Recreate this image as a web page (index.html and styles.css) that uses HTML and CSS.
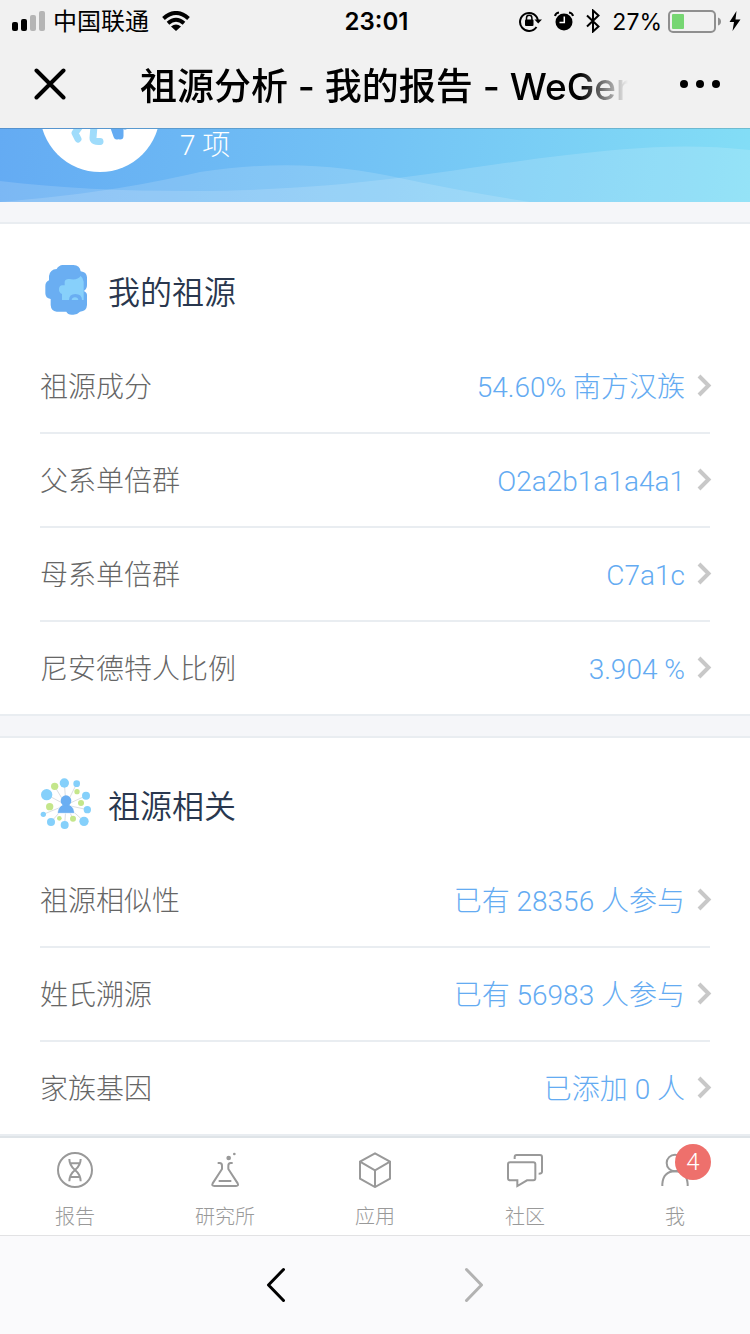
FILE: index.html
```
<!DOCTYPE html>
<html lang="zh-CN">
<head>
<meta charset="utf-8" />
<meta name="viewport" content="width=device-width, initial-scale=1" />
<title>祖源分析 - 我的报告 - WeGene</title>
<link rel="stylesheet" href="styles.css">
</head>
<body>
<header class="top">
    <div class="status">
        <div class="status_left">
            <svg width="34" height="20" viewBox="0 0 34 20"><rect y="11" width="6" height="9" rx="2"/><rect x="9" y="8" width="6" height="12" rx="2"/><g fill="#b5b5b5"><rect x="18" y="4" width="6" height="16" rx="2"/><rect x="27" width="6" height="20" rx="2"/></g></svg>
            <span class="carrier">中国联通</span>
            <svg width="28" height="20" viewBox="0 0 28 20"><g fill="none" stroke="#000" stroke-width="4"><path d="M1.500 7.500Q14-3.500 26.500 7.500"/><path d="M6 12.200Q14 5.400 22 12.200"/></g><path d="M9 15.400Q14 11.500 19 15.400L14 20Z"/></svg>
        </div>
        <span class="time">23:01</span>
        <div class="status_right">
            <svg width="23" height="22" viewBox="0 0 23 22"><path d="M17.500 17A9 9 0 1 1 19 11" fill="none" stroke="#000" stroke-width="2"/><path d="M15.500 9.500H23L19.200 13.500Z"/><rect x="6" y="9.500" width="8.500" height="6.500" rx="1"/><path d="M7.500 10V8a2.700 2.700 0 0 1 5.400 0v2" fill="none" stroke="#000" stroke-width="1.500"/></svg>
            <svg width="20" height="20" viewBox="0 0 20 20"><circle cx="10" cy="11" r="8.500"/><path d="M1 5Q1.500 2 5 1.500M19 5Q18.500 2 15 1.500" fill="none" stroke="#000" stroke-width="2"/><path d="M10.300 5.500V11.500H5.500" fill="none" stroke="#fff" stroke-width="1.500"/></svg>
            <svg width="14" height="24" viewBox="0 0 14 24"><path d="M1 6.500L12.500 17.500L7 22.500V1.500L12.500 6.500L1 17.500" fill="none" stroke="#000" stroke-width="2"/></svg>
            <span class="percent">27%</span>
            <svg width="54" height="24" viewBox="0 0 54 24"><rect x="1" y="2" width="46" height="21" rx="4" fill="none" stroke="#8f8f8f" stroke-width="2"/><rect x="4" y="5" width="12" height="15" rx="1" fill="#76d672"/><path d="M50 8.500Q53 9.500 53 12.500Q53 15.500 50 16.500Z" fill="#8f8f8f"/></svg>
            <svg width="12" height="20" viewBox="0 0 12 20"><path d="M7.500 0L0.500 11H5L3.500 20L11.500 8.500H6.500Z"/></svg>
        </div>
    </div>
    <div class="titlebar">
        <button class="close" aria-label="关闭"><svg width="32" height="32" viewBox="0 0 32 32"><path d="M2.500 2.500L29.500 29.500M29.500 2.500L2.500 29.500" stroke="#000" stroke-width="4" stroke-linecap="round"/></svg></button>
        <h1>祖源分析 - 我的报告 - WeGene</h1>
        <button class="more" aria-label="更多"><svg width="40" height="8" viewBox="0 0 40 8"><circle cx="4" cy="4" r="4"/><circle cx="20" cy="4" r="4"/><circle cx="36" cy="4" r="4"/></svg></button>
    </div>
</header>

<main>
    <div class="banner">
        <svg class="wave" viewBox="0 0 750 74" preserveAspectRatio="none">
            <g fill="#fff" fill-opacity="0.150">
                <path d="M0 53C60 60 120 63 190 63C360 63 460 39 567 27C620 21 680 14 750 22V74H0Z"/>
                <path d="M0 74C80 67 135 59 200 44C280 32 340 37 400 50Q460 63 530 74Z"/>
            </g>
        </svg>
        <svg class="avatar" width="120" height="120" viewBox="0 0 120 120">
            <circle cx="60" cy="60" r="60" fill="#fff"/>
            <g fill="none" stroke-linecap="round" stroke-linejoin="round" stroke-width="7">
                <path d="M40 74L35 81L38 87M54 74L53 86Q53 90 60 89.500" stroke="#9fdcfb"/>
                <path d="M72 70L77 84M74 74L80 78V84" stroke="#64abf2"/>
                <path d="M85 70V75" stroke="#64abf2" stroke-width="5"/>
            </g>
        </svg>
        <span class="count">7 项</span>
    </div>

    <section class="card">
        <h2>
            <svg width="52" height="52" viewBox="60 42 156 156">
                <path fill="#6aaef2" d="M128 45H160Q180 46 182 64Q200 66 201 82V105Q201 117 191 123Q201 127 201 135V165Q200 184 180 185Q172 194 160 194H155Q143 194 139 185H110Q93 183 92 165V147Q76 145 76 130V108Q76 96 87 91V78Q90 58 110 57Q116 46 128 45Z"/>
                <path fill="#87d0fb" d="M182 78Q190 84 191 95V123V150H126V132Q116 128 117 117Q118 106 127 106H134V95Q136 86 148 87Q172 92 182 78Z"/>
                <path fill="#6aaef2" d="M147 151Q147 132 166 132Q186 132 186 151Z"/>
                <path fill="#87d0fb" d="M155 150Q156 142 165 142Q174 142 175 150Z"/>
            </svg>
            <span>我的祖源</span>
        </h2>
        <ul>
            <li><a href="#"><span class="name">祖源成分</span><span class="value">54.60% 南方汉族</span><svg class="arrow" width="16" height="24" viewBox="0 0 16 24"><path d="M3 2L12.500 11.500L3 21"/></svg></a></li>
            <li><a href="#"><span class="name">父系单倍群</span><span class="value">O2a2b1a1a4a1</span><svg class="arrow" width="16" height="24" viewBox="0 0 16 24"><path d="M3 2L12.500 11.500L3 21"/></svg></a></li>
            <li><a href="#"><span class="name">母系单倍群</span><span class="value">C7a1c</span><svg class="arrow" width="16" height="24" viewBox="0 0 16 24"><path d="M3 2L12.500 11.500L3 21"/></svg></a></li>
            <li><a href="#"><span class="name">尼安德特人比例</span><span class="value">3.904 %</span><svg class="arrow" width="16" height="24" viewBox="0 0 16 24"><path d="M3 2L12.500 11.500L3 21"/></svg></a></li>
        </ul>
    </section>

    <section class="card">
        <h2>
            <svg width="52" height="52" viewBox="60 39 156 156">
                <path stroke="#dcdfe2" stroke-width="3" d="M138 120L80 89M138 120L133 54M138 120L170 56M138 120L198 92M138 120L202 134M138 120L192 169M138 120L134 180M138 120L93 171M138 120L70 148M138 120L104 64M138 120L159 161"/>
                <g fill="#85d0fb"><circle cx="80" cy="89" r="17"/><circle cx="133" cy="54" r="14"/><circle cx="170" cy="56" r="10"/><circle cx="198" cy="92" r="12"/><circle cx="202" cy="134" r="11"/><circle cx="192" cy="169" r="14"/><circle cx="134" cy="180" r="12"/><circle cx="93" cy="171" r="12"/><circle cx="70" cy="148" r="8"/></g>
                <g fill="#c4e68b"><circle cx="104" cy="64" r="11"/><circle cx="171" cy="80" r="8"/><circle cx="183" cy="114" r="9"/><circle cx="159" cy="161" r="9"/><circle cx="118" cy="160" r="7"/><circle cx="89" cy="125" r="11"/></g>
                <path fill="#6aaef2" stroke="#fff" stroke-width="2" d="M112 145Q114 119 138 117Q162 119 164 145Z"/>
                <circle cx="138" cy="107" r="16" fill="#6aaef2"/>
            </svg>
            <span>祖源相关</span>
        </h2>
        <ul>
            <li><a href="#"><span class="name">祖源相似性</span><span class="value">已有 28356 人参与</span><svg class="arrow" width="16" height="24" viewBox="0 0 16 24"><path d="M3 2L12.500 11.500L3 21"/></svg></a></li>
            <li><a href="#"><span class="name">姓氏溯源</span><span class="value">已有 56983 人参与</span><svg class="arrow" width="16" height="24" viewBox="0 0 16 24"><path d="M3 2L12.500 11.500L3 21"/></svg></a></li>
            <li><a href="#"><span class="name">家族基因</span><span class="value">已添加 0 人</span><svg class="arrow" width="16" height="24" viewBox="0 0 16 24"><path d="M3 2L12.500 11.500L3 21"/></svg></a></li>
        </ul>
    </section>
</main>

<nav class="tabs">
    <a href="#">
        <svg width="36" height="36" viewBox="171 66 108 108"><circle cx="225" cy="120" r="51"/><path d="M208 87Q208 106 225 120Q242 134 242 154M242 87Q242 106 225 120Q208 134 208 154M212 100H238M212 141H238"/></svg>
        报告
    </a>
    <a href="#">
        <svg width="36" height="36" viewBox="621 66 108 108"><path d="M653 99H659Q666 99 666 107V117L638 160Q634 168 643 168H708Q717 168 713 160L685 117V107Q685 99 692 99H698M656 153H694"/><g class="dot"><circle cx="686" cy="84" r="7"/><circle cx="703" cy="72" r="4"/></g></svg>
        研究所
    </a>
    <a href="#">
        <svg width="36" height="36" viewBox="171 66 108 108"><path d="M225 70L270 95V146L225 171L180 146V95ZM180 95L225 121L270 95M225 121V171"/></svg>
        应用
    </a>
    <a href="#">
        <svg width="36" height="36" viewBox="621 66 108 108"><path d="M644 87V81Q644 75 650 75H720Q726 75 726 81V125Q726 131 716 131M630 97H700Q706 97 706 103V145Q706 151 700 151H681L652 168V151H630Q624 151 624 145V103Q624 97 630 97Z"/></svg>
        社区
    </a>
    <a href="#">
        <svg width="36" height="36" viewBox="171 66 108 108"><circle cx="225" cy="99" r="25"/><path d="M187 168V162Q190 124 225 124Q260 124 263 162V168"/></svg>
        我
        <span class="badge">4</span>
    </a>
</nav>

<footer class="history">
    <button aria-label="后退"><svg width="20" height="36" viewBox="0 0 20 36"><path d="M17.500 2.500L2.500 18L17.500 33.500" stroke="#000"/></svg></button>
    <button aria-label="前进" disabled><svg width="20" height="36" viewBox="0 0 20 36"><path d="M2.500 2.500L17.500 18L2.500 33.500" stroke="#b2b2b2"/></svg></button>
</footer>
</body>
</html>
```
FILE: styles.css
```
* { box-sizing: border-box; }
body { margin: 0; min-height: 100vh; display: flex; flex-direction: column; background: #f5f6f9; font: 300 28px/40px Roboto, "Noto Sans CJK SC", sans-serif; }
h1, h2, ul { margin: 0; padding: 0; }
li { list-style: none; }
a { text-decoration: none; color: inherit; }
svg { display: block; flex: none; }
button { margin: 0; padding: 0; border: 0; background: none; display: flex; align-items: center; justify-content: center; cursor: pointer; }
main { flex: 1; }

.top { background: #f1f1f1; color: #000; font-family: Inter, "Noto Sans CJK SC", sans-serif; }
.status { height: 40px; padding: 0 9px 0 12px; display: grid; grid-template-columns: 1fr auto 1fr; align-items: center; font-size: 24px; font-weight: 400; }
.status span { padding-top: 2px; }
.status_left, .status_right { display: flex; align-items: center; }
.status_right { justify-content: flex-end; gap: 12px; }
.carrier { margin: 0 13px 0 7px; }
.time { font-weight: 600; }
.percent { font-size: 23px; }
.percent + svg { margin: 0 -5px 0 -6px; }

.titlebar { height: 88px; padding: 0 30px 0 34px; display: flex; align-items: center; }
.titlebar h1 { flex: 1; min-width: 0; margin: 0 52px 0 74px; padding-top: 6px; overflow: hidden; white-space: nowrap; font-size: 37px; line-height: 56px; font-weight: 500; -webkit-mask-image: linear-gradient(to left, transparent, #000 48px); mask-image: linear-gradient(to left, transparent, #000 48px); }

.banner { height: 74px; padding: 0 40px 30px; display: flex; align-items: flex-end; overflow: hidden; position: relative; background: linear-gradient(100deg, #64abf3, #73c3f5 50%, #83def6); border-top: 1px solid rgba(0, 0, 0, 0.150); }
.wave { position: absolute; left: 0; bottom: 0; width: 100%; height: 74px; }
.avatar { position: relative; }
.count { margin-left: 20px; color: #fff; position: relative; line-height: 52px; }

.card { margin-top: 20px; background: #fff; border-top: 2px solid #e9edf1; }
.card h2 { height: 116px; padding: 40px 40px 24px; display: flex; align-items: center; gap: 16px; color: #29374e; font-size: 32px; font-weight: 350; }
.card h2 span { padding-top: 6px; }
.card li { margin: 0 40px; border-bottom: 2px solid #e9edf1; }
.card li:last-child { margin: 0; padding: 0 40px; }
.card li a { height: 92px; display: flex; align-items: center; }
.name, .value { padding-top: 4px; }
.name { color: #666; }
.value { margin-left: auto; color: #64abf2; }
.arrow { margin: 0 -2px 0 11px; fill: none; stroke: #c8c8c8; stroke-width: 4; }

.tabs { display: flex; background: #fff; border-top: 2px solid #dfe4e8; border-bottom: 1px solid #e2e2e4; }
.tabs a { flex: 1; padding: 14px 0 4px; display: flex; flex-direction: column; align-items: center; gap: 15px; position: relative; color: #999; font-size: 20px; line-height: 28px; }
.tabs svg { fill: none; stroke: #999; stroke-width: 6; }
.tabs .dot { fill: #999; stroke: none; }
.badge { position: absolute; left: 50%; top: 6px; width: 36px; height: 36px; border-radius: 50%; background: #ee706c; color: #fff; font-size: 24px; line-height: 36px; text-align: center; }

.history { height: 98px; display: flex; align-items: center; justify-content: center; gap: 98px; background: #fafafc; }
.history button { width: 100px; height: 80px; }
.history path { fill: none; stroke-width: 3; stroke-linecap: round; stroke-linejoin: round; }
```
